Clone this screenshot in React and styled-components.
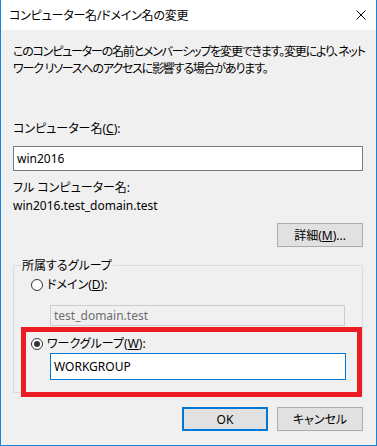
import React from "react";
import styled, { createGlobalStyle } from "styled-components";

const GlobalStyle = createGlobalStyle`
  html, body {
    margin: 0;
    padding: 0;
    background: #fff;
  }
  body {
    font-family: "Noto Sans", "Noto Sans CJK JP", sans-serif;
    font-size: 12px;
    color: #000;
    font-feature-settings: "palt";
  }
`;

const Window = styled.div`
  position: relative;
  width: 377px;
  height: 446px;
  box-sizing: border-box;
  border: 1px solid #1883d7;
  border-top: none;
  background: #f0f0f0;
  display: flex;
  flex-direction: column;
  overflow: hidden;
`;

const TitleBar = styled.div`
  height: 30px;
  flex-shrink: 0;
  background: #fff;
  display: flex;
  align-items: center;
  justify-content: space-between;
  padding: 0 10px 0 8px;
`;

const Title = styled.span`
  font-size: 12px;
  line-height: 17px;
  letter-spacing: -0.2px;
`;

const Content = styled.div`
  flex: 1;
  padding: 13px 13px 0 12px;
  display: flex;
  flex-direction: column;
`;

const Desc = styled.p`
  margin: 0;
  line-height: 17px;
  letter-spacing: -1.2px;
  span {
    display: block;
    white-space: nowrap;
  }
`;

const FieldLabel = styled.div`
  margin-top: ${(p) => p.$top || 0}px;
  line-height: ${(p) => p.$lh || 17}px;
  white-space: nowrap;
`;

const TextBox = styled.div`
  margin-top: ${(p) => p.$top || 0}px;
  margin-left: ${(p) => p.$left || 0}px;
  width: ${(p) => (p.$width ? p.$width + "px" : "auto")};
  height: ${(p) => p.$height}px;
  box-sizing: border-box;
  border: 1px solid
    ${(p) => (p.$state === "focus" ? "#0078d7" : p.$state === "disabled" ? "#cccccc" : "#7a7a7a")};
  background: ${(p) => (p.$state === "disabled" ? "#f0f0f0" : "#fff")};
  color: ${(p) => (p.$state === "disabled" ? "#6d6d6d" : "#000")};
  padding: 0 3px;
  display: flex;
  align-items: center;
  white-space: nowrap;
`;

const ButtonRow = styled.div`
  margin-top: ${(p) => p.$top || 0}px;
  display: flex;
  justify-content: flex-end;
  gap: 9px;
`;

const Button = styled.button`
  width: 86px;
  height: 24px;
  box-sizing: border-box;
  margin: 0;
  padding: 0;
  background: #e1e1e1;
  border: ${(p) => (p.$primary ? "2px solid #0078d7" : "1px solid #adadad")};
  font: inherit;
  color: #000;
  display: flex;
  align-items: center;
  justify-content: center;
`;

const GroupBox = styled.fieldset`
  margin: 10px 0 0;
  padding: 0 0 12px;
  border: 1px solid #dcdcdc;
  min-width: 0;
`;

const GroupTitle = styled.legend`
  margin-left: 7px;
  padding: 0 1px;
  line-height: 17px;
`;

const RadioRow = styled.div`
  margin-top: ${(p) => p.$top || 0}px;
  padding-left: 17px;
  display: flex;
  align-items: center;
  gap: 4px;
  line-height: 17px;
`;

const Radio = styled.span`
  width: 12px;
  height: 12px;
  box-sizing: border-box;
  border: 1px solid #333;
  border-radius: 50%;
  background: #fff;
  display: flex;
  align-items: center;
  justify-content: center;
  &::after {
    content: "";
    width: 6px;
    height: 6px;
    border-radius: 50%;
    background: ${(p) => (p.$checked ? "#333" : "transparent")};
  }
`;

const Highlight = styled.div`
  position: absolute;
  left: 20px;
  top: 327px;
  width: 341px;
  height: 70px;
  box-sizing: border-box;
  border: 5px solid #ed1c24;
  pointer-events: none;
`;

const CloseIcon = () => (
  <svg width="10" height="10" viewBox="0 0 10 10">
    <path d="M0.5 0.5 L9.5 9.5 M9.5 0.5 L0.5 9.5" stroke="#000" strokeWidth="1" fill="none" />
  </svg>
);

export default function App() {
  return (
    <>
      <GlobalStyle />
      <Window>
        <TitleBar>
          <Title>コンピューター名/ドメイン名の変更</Title>
          <CloseIcon />
        </TitleBar>
        <Content>
          <Desc>
            <span>このコンピューターの名前とメンバーシップを変更できます。変更により、ネット</span>
            <span>ワーク リソースへのアクセスに影響する場合があります。</span>
          </Desc>

          <FieldLabel $top={43}>
            コンピューター名(<u>C</u>):
          </FieldLabel>
          <TextBox $top={9} $height={25}>
            win2016
          </TextBox>

          <FieldLabel $top={8} $lh={18}>
            フル コンピューター名:
          </FieldLabel>
          <FieldLabel $lh={18}>win2016.test_domain.test</FieldLabel>

          <ButtonRow $top={8}>
            <Button>
              詳細(<u>M</u>)...
            </Button>
          </ButtonRow>

          <GroupBox>
            <GroupTitle>所属するグループ</GroupTitle>
            <RadioRow $top={2}>
              <Radio />
              <span>
                ドメイン(<u>D</u>):
              </span>
            </RadioRow>
            <TextBox $top={12} $left={36} $width={295} $height={21} $state="disabled">
              test_domain.test
            </TextBox>
            <RadioRow $top={9}>
              <Radio $checked />
              <span>
                ワークグループ(<u>W</u>):
              </span>
            </RadioRow>
            <TextBox $top={1} $left={36} $width={296} $height={27} $state="focus">
              WORKGROUP
            </TextBox>
          </GroupBox>

          <ButtonRow $top={14}>
            <Button $primary>OK</Button>
            <Button>キャンセル</Button>
          </ButtonRow>
        </Content>
        <Highlight />
      </Window>
    </>
  );
}
